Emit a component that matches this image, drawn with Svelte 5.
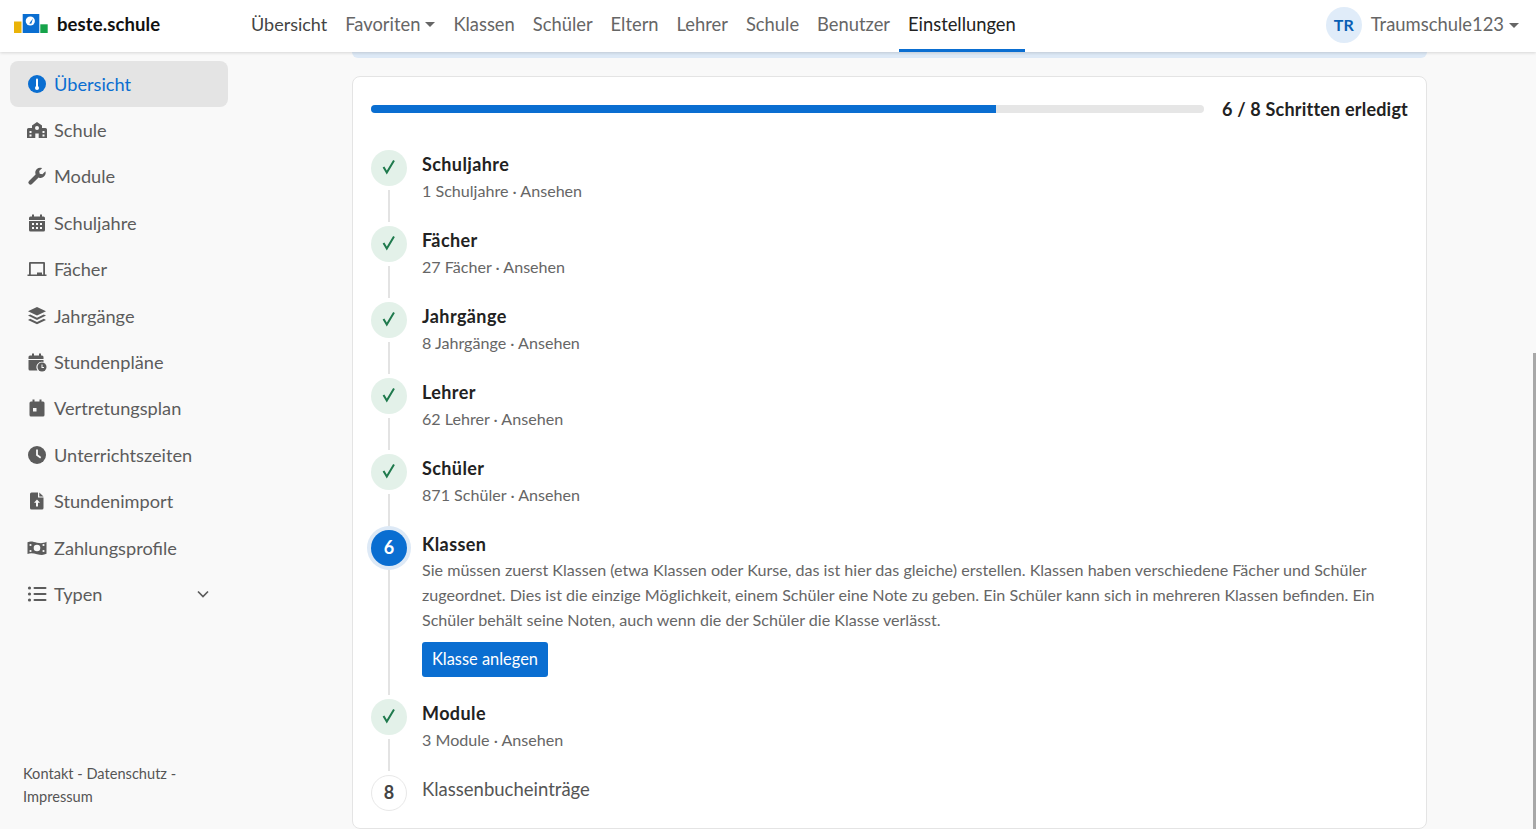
<script>
  const navLinks = ['Übersicht', 'Favoriten', 'Klassen', 'Schüler', 'Eltern', 'Lehrer', 'Schule', 'Benutzer', 'Einstellungen'];

  const sideItems = [
    { label: 'Übersicht', icon: 'info', active: true },
    { label: 'Schule', icon: 'school' },
    { label: 'Module', icon: 'wrench' },
    { label: 'Schuljahre', icon: 'calendar' },
    { label: 'Fächer', icon: 'board' },
    { label: 'Jahrgänge', icon: 'layers' },
    { label: 'Stundenpläne', icon: 'calclock' },
    { label: 'Vertretungsplan', icon: 'calday' },
    { label: 'Unterrichtszeiten', icon: 'clock' },
    { label: 'Stundenimport', icon: 'file' },
    { label: 'Zahlungsprofile', icon: 'money' },
    { label: 'Typen', icon: 'list', chevron: true }
  ];

  const steps = [
    { title: 'Schuljahre', sub: '1 Schuljahre · Ansehen', state: 'done' },
    { title: 'Fächer', sub: '27 Fächer · Ansehen', state: 'done' },
    { title: 'Jahrgänge', sub: '8 Jahrgänge · Ansehen', state: 'done' },
    { title: 'Lehrer', sub: '62 Lehrer · Ansehen', state: 'done' },
    { title: 'Schüler', sub: '871 Schüler · Ansehen', state: 'done' },
    { title: 'Klassen', state: 'active', num: 6 },
    { title: 'Module', sub: '3 Module · Ansehen', state: 'done' },
    { title: 'Klassenbucheinträge', state: 'todo', num: 8 }
  ];
</script>

<div class="page">
  <header class="topbar">
    <div class="brand">
      <svg class="logo" width="36" height="20" viewBox="0 0 36 20">
        <rect x="0" y="7.500" width="7.500" height="11.500" fill="#eab308" />
        <rect x="8.700" y="0" width="16.600" height="19" fill="#0a6ed1" />
        <circle cx="16.300" cy="7" r="4.600" fill="#fff" />
        <path d="M15.200 9.500L19 4.500l-1.700 5.300z" fill="#0a6ed1" />
        <rect x="26.300" y="10.300" width="7.400" height="8.700" fill="#16a34a" />
      </svg>
      <span class="brand-name">beste.schule</span>
    </div>
    <nav class="links">
      {#each navLinks as link}
        <span class="link" class:current={link === 'Einstellungen'}>
          {link}
          {#if link === 'Favoriten'}<i class="caret"></i>{/if}
        </span>
      {/each}
    </nav>
    <div class="user">
      <span class="avatar">TR</span>
      <span class="user-name">Traumschule123</span>
      <i class="caret"></i>
    </div>
  </header>

  <div class="content">
    <aside class="sidebar">
      <ul class="side-list">
        {#each sideItems as item}
          <li class="side-item" class:active={item.active}>
            <svg class="side-icon" width="20" height="20" viewBox="0 0 20 20" fill="currentColor">
              {#if item.icon === 'info'}
                <circle cx="10" cy="10" r="9" />
                <circle cx="10" cy="14" r="2" fill="#fff" />
                <rect x="9" y="4.500" width="2" height="9" rx="1" fill="#fff" />
              {:else if item.icon === 'school'}
                <path d="M10 2l5 3.600V8h3.500A1.500 1.500 0 0 1 20 9.500V18H0V9.500A1.500 1.500 0 0 1 1.500 8H5V5.600z" />
                <circle cx="10" cy="8" r="2" fill="#f9f9f9" />
                <path d="M8.300 13.500h3.400V18H8.300zM2.500 11h2v2h-2zM15.500 11h2v2h-2zM2.500 14.500h2v2h-2zM15.500 14.500h2v2h-2z" fill="#f9f9f9" />
              {:else if item.icon === 'wrench'}
                <path d="M18.400 5.300l-3 3-2.700-.5-.5-2.700 3-3a5 5 0 0 0-6.600 6.300L2 15a2.100 2.100 0 0 0 3 3l6.600-6.600a5 5 0 0 0 6.800-6.100z" />
              {:else if item.icon === 'calendar'}
                <path d="M5 1.500h2v2h6v-2h2v2h1.500A1.500 1.500 0 0 1 18 5v2H2V5a1.500 1.500 0 0 1 1.500-1.500H5zM2 8h16v9a1.500 1.500 0 0 1-1.500 1.500h-13A1.500 1.500 0 0 1 2 17z" />
                <path d="M5 10h2v2H5zM9 10h2v2H9zM13 10h2v2h-2zM5 14h2v2H5zM9 14h2v2H9zM13 14h2v2h-2z" fill="#f9f9f9" />
              {:else if item.icon === 'board'}
                <path d="M3 3h14a1 1 0 0 1 1 1v11.500h1.500V17H.500v-1.500H2V4a1 1 0 0 1 1-1zm.800 1.800v10.700H10v-2h5v2h1.200V4.800z" />
              {:else if item.icon === 'layers'}
                <path d="M10 1l9 4.300-9 4.300-9-4.300z" />
                <path d="M3.200 8.500L10 11.700l6.800-3.200 2.200 1.100-9 4.300-9-4.300z" />
                <path d="M3.200 12.800L10 16l6.800-3.200 2.200 1.100-9 4.300-9-4.300z" />
              {:else if item.icon === 'calclock'}
                <path d="M5 1.500h2v2h5v-2h2v2h1A1.500 1.500 0 0 1 16.500 5v2H1.500V5A1.500 1.500 0 0 1 3 3.500h2zM1.500 8h15v2a5.500 5.500 0 0 0-6 8.500H3A1.500 1.500 0 0 1 1.500 17z" />
                <circle cx="15" cy="15" r="4.500" />
                <path d="M14.500 12.500h1V15H17v1h-2.500z" fill="#f9f9f9" />
              {:else if item.icon === 'calday'}
                <path d="M5.500 1.500h2v2h5v-2h2v2H16A1.500 1.500 0 0 1 17.500 5v12a1.500 1.500 0 0 1-1.500 1.500H4A1.500 1.500 0 0 1 2.500 17V5A1.500 1.500 0 0 1 4 3.500h1.500z" />
                <rect x="6" y="10" width="3.500" height="3.500" fill="#f9f9f9" />
              {:else if item.icon === 'clock'}
                <circle cx="10" cy="10" r="9" />
                <path d="M9.100 4.500h1.800v5l3.300 2.400-1 1.500-4.100-3z" fill="#f9f9f9" />
              {:else if item.icon === 'file'}
                <path d="M4.500 1.500H11v5h5.500V17a1.500 1.500 0 0 1-1.500 1.500H4.500A1.500 1.500 0 0 1 3 17V3a1.500 1.500 0 0 1 1.500-1.500zM12.300 1.500l4.200 4h-4.200z" />
                <path d="M10 8.500l3 3.200h-2V15.500H9v-3.800H7z" fill="#f9f9f9" />
              {:else if item.icon === 'money'}
                <path d="M0.500 4.300c3.200-1.500 6.300-.3 9.500.4s6.300.8 9.500-.9v12c-3.200 1.700-6.300 1.100-9.500.4s-6.300-1.500-9.500-.2z" />
                <circle cx="10" cy="10" r="3.300" fill="#f9f9f9" />
                <circle cx="3.500" cy="7" r="1.100" fill="#f9f9f9" />
                <circle cx="16.500" cy="7" r="1.100" fill="#f9f9f9" />
                <circle cx="3.500" cy="13" r="1.100" fill="#f9f9f9" />
                <circle cx="16.500" cy="13" r="1.100" fill="#f9f9f9" />
              {:else if item.icon === 'list'}
                <circle cx="2.500" cy="4" r="1.600" />
                <circle cx="2.500" cy="10" r="1.600" />
                <circle cx="2.500" cy="16" r="1.600" />
                <rect x="6.500" y="3" width="13" height="2" rx="1" />
                <rect x="6.500" y="9" width="13" height="2" rx="1" />
                <rect x="6.500" y="15" width="13" height="2" rx="1" />
              {/if}
            </svg>
            <span>{item.label}</span>
            {#if item.chevron}
              <svg class="chevron" width="14" height="14" viewBox="0 0 14 14" fill="none" stroke="currentColor" stroke-width="1.700">
                <path d="M2 4.500l5 5 5-5" />
              </svg>
            {/if}
          </li>
        {/each}
      </ul>
      <p class="side-foot">Kontakt - Datenschutz - Impressum</p>
    </aside>

    <main class="main">
      <div class="alert-edge"></div>
      <section class="card">
        <div class="progress-row">
          <div class="track"><div class="fill" style="width: 75%"></div></div>
          <strong class="progress-label">6 / 8 Schritten erledigt</strong>
        </div>

        <ol class="steps">
          {#each steps as step, i}
            <li class="step" class:last={i === steps.length - 1}>
              <div class="rail">
                <span class="dot {step.state}">
                  {#if step.state === 'done'}
                    <svg width="16" height="16" viewBox="0 0 16 16" fill="none" stroke="#1f7a4d" stroke-width="2">
                      <path d="M2.500 8l3.300 5.500L13 1.500" />
                    </svg>
                  {:else}
                    {step.num}
                  {/if}
                </span>
                {#if i < steps.length - 1}<span class="line"></span>{/if}
              </div>
              <div class="body">
                <div class="title {step.state}">{step.title}</div>
                {#if step.sub}<div class="sub">{step.sub}</div>{/if}
                {#if step.state === 'active'}
                  <p class="desc">Sie müssen zuerst Klassen (etwa Klassen oder Kurse, das ist hier das gleiche) erstellen. Klassen haben verschiedene Fächer und Schüler zugeordnet. Dies ist die einzige Möglichkeit, einem Schüler eine Note zu geben. Ein Schüler kann sich in mehreren Klassen befinden. Ein Schüler behält seine Noten, auch wenn die der Schüler die Klasse verlässt.</p>
                  <button class="primary">Klasse anlegen</button>
                {/if}
              </div>
            </li>
          {/each}
        </ol>
      </section>
    </main>
  </div>

  <div class="scroll-thumb"></div>
</div>

<style>
  :global(body) {
    background: #f9f9f9;
    font-family: 'Lato', 'Noto Sans', sans-serif;
    color: #212529;
  }

  .page {
    height: 829px;
    overflow: hidden;
    position: relative;
    display: flex;
    flex-direction: column;
  }

  .topbar {
    height: 52px;
    flex: none;
    background: #fff;
    box-shadow: 0 1px 3px rgba(0, 0, 0, 0.14);
    display: flex;
    align-items: stretch;
    padding: 0 17px 0 14px;
    position: relative;
    z-index: 2;
  }

  .brand {
    display: flex;
    align-items: center;
    width: 228px;
    flex: none;
    padding-bottom: 4px;
    box-sizing: border-box;
  }

  .logo {
    margin-right: 7px;
  }

  .brand-name {
    font-size: 18.500px;
    font-weight: 700;
    letter-spacing: 0.1px;
    color: #111;
  }

  .links {
    display: flex;
    flex: 1;
  }

  .link {
    display: flex;
    align-items: center;
    padding: 0 9px 4px;
    font-size: 18.350px;
    color: #666;
  }

  .link:first-child {
    color: #444;
    font-size: 18px;
  }

  .link.current {
    color: #222;
    box-shadow: inset 0 -3px 0 #0a6ed1;
  }

  .caret {
    display: inline-block;
    margin-left: 5px;
    border-top: 5px solid currentColor;
    border-left: 5px solid transparent;
    border-right: 5px solid transparent;
  }

  .user {
    display: flex;
    align-items: center;
    color: #666;
    font-size: 18.400px;
    padding-bottom: 2px;
  }

  .user-name {
    padding-bottom: 2px;
  }

  .avatar {
    width: 36px;
    height: 36px;
    border-radius: 50%;
    background: #e0ecf9;
    color: #0a5fb4;
    font-size: 16px;
    font-weight: 700;
    display: flex;
    align-items: center;
    justify-content: center;
    margin-right: 9px;
    padding-bottom: 2px;
    box-sizing: border-box;
  }

  .content {
    flex: 1;
    display: flex;
    min-height: 0;
  }

  .sidebar {
    width: 352px;
    flex: none;
    box-sizing: border-box;
    padding: 9px 0 0 10px;
    display: flex;
    flex-direction: column;
  }

  .side-list {
    list-style: none;
    margin: 0;
    padding: 0;
    width: 218px;
  }

  .side-item {
    height: 46.400px;
    box-sizing: border-box;
    display: flex;
    align-items: center;
    gap: 7px;
    padding: 0 0 1px 17px;
    font-size: 18.200px;
    color: #5c5c5c;
    border-radius: 8px;
  }

  .side-item.active {
    background: #e4e4e4;
    color: #0a6ed1;
  }

  .side-icon {
    flex: none;
  }

  .chevron {
    margin-left: auto;
    margin-right: 18px;
  }

  .side-foot {
    margin: auto 0 21px 13px;
    width: 180px;
    font-size: 14.600px;
    line-height: 23px;
    color: #555;
  }

  .main {
    width: 1075px;
    flex: none;
    min-width: 0;
  }

  .alert-edge {
    height: 6px;
    background: #dde9f6;
    border-radius: 0 0 8px 8px;
    margin-bottom: 18px;
  }

  .card {
    background: #fff;
    border: 1px solid #e4e4e4;
    border-radius: 8px;
    padding: 19px 18px 0;
    height: 753px;
    box-sizing: border-box;
  }

  .progress-row {
    display: flex;
    align-items: center;
    gap: 18px;
    height: 26px;
    margin-bottom: 28px;
  }

  .track {
    flex: 1;
    height: 8px;
    background: #e6e6e6;
    border-radius: 4px;
    overflow: hidden;
  }

  .fill {
    height: 100%;
    background: #0a6ed1;
  }

  .progress-label {
    font-size: 18px;
    letter-spacing: 0.2px;
    color: #222;
  }

  .steps {
    list-style: none;
    margin: 0;
    padding: 0;
  }

  .step {
    display: flex;
    gap: 15px;
    min-height: 76px;
  }

  .rail {
    width: 36px;
    flex: none;
    display: flex;
    flex-direction: column;
    align-items: center;
  }

  .dot {
    width: 36px;
    height: 36px;
    flex: none;
    border-radius: 50%;
    box-sizing: border-box;
    display: flex;
    align-items: center;
    justify-content: center;
    padding-bottom: 2px;
    font-size: 18px;
    font-weight: 700;
  }

  .dot.done {
    background: #e3f1e9;
  }

  .dot.active {
    background: #0a6ed1;
    color: #fff;
    box-shadow: 0 0 0 4px #dde9f6;
  }

  .dot.todo {
    background: #fff;
    border: 1px solid #e8e8e8;
    color: #444;
  }

  .line {
    flex: 1;
    width: 2px;
    margin: 4px 0;
    background: #e3e3e3;
  }

  .body {
    flex: 1;
    min-width: 0;
  }

  .title {
    font-size: 18px;
    line-height: 28px;
    font-weight: 700;
    letter-spacing: 0.4px;
    color: #222;
  }

  .title.todo {
    font-weight: 400;
    font-size: 18.500px;
    letter-spacing: 0;
    color: #555;
    line-height: 24px;
    margin-top: 2px;
  }

  .sub {
    font-size: 16.100px;
    line-height: 25px;
    color: #666;
  }

  .desc {
    margin: -1px 0 0;
    font-size: 16.100px;
    line-height: 25px;
    color: #666;
  }

  .primary {
    display: block;
    margin: 10px 0 22px;
    height: 35px;
    padding: 0 10px 2px;
    border: none;
    border-radius: 3px;
    background: #0a6ed1;
    color: #fff;
    font: inherit;
    font-size: 16.400px;
  }

  .scroll-thumb {
    position: absolute;
    right: 0;
    top: 353px;
    bottom: 0;
    width: 3px;
    background: #a8a8a8;
  }
</style>
